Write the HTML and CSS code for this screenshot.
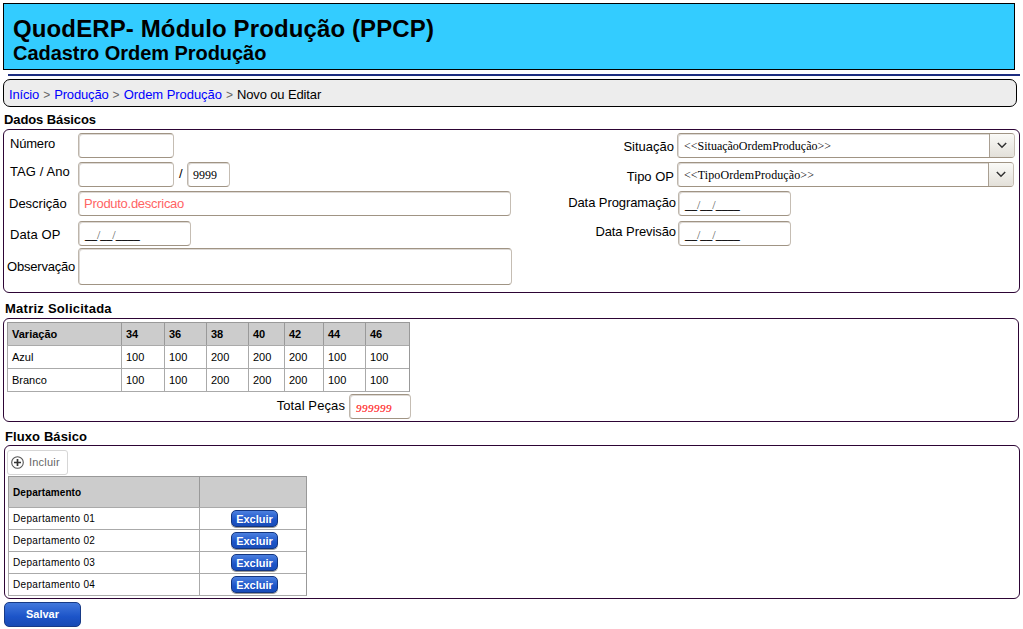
FILE: index.html
```html
<!DOCTYPE html>
<html lang="pt-BR">
<head>
<meta charset="utf-8">
<title>QuodERP - Cadastro Ordem Produção</title>
<link rel="stylesheet" href="styles.css">
</head>
<body>
<header class="banner"><h1>QuodERP- Módulo Produção (PPCP)</h1><h2>Cadastro Ordem Produção</h2></header>
<div class="rule"></div>
<nav class="crumbs"><a>Início</a><i>&gt;</i><a>Produção</a><i>&gt;</i><a class="c3">Ordem Produção</a><i>&gt;</i><span>Novo ou Editar</span></nav>
<h3 class="title t1">Dados Básicos</h3>
<section class="panel basic">
  <div class="left">
    <div class="row r1"><label class="l-num">Número</label><div class="input w95"></div></div>
    <div class="row r2"><label class="l-tag">TAG / Ano</label><div class="input w95"></div><span class="slash">/</span><div class="input w43 serif">9999</div></div>
    <div class="row r3"><label class="l-desc">Descrição</label><div class="input w432 red">Produto.descricao</div></div>
    <div class="row r4"><label class="l-data">Data OP</label><div class="input w112 date">__<em>/</em>__<em>/</em>____</div></div>
    <div class="row r5"><label class="l-obs">Observação</label><div class="input w433 tall"></div></div>
  </div>
  <div class="right">
    <div class="row r1"><label class="l-sit">Situação</label><div class="input select s1"><span class="v1">&lt;&lt;SituaçãoOrdemProdução&gt;&gt;</span><b><svg width="10" height="7" viewBox="0 0 10 7"><path d="M.8 1 5 5.3 9.200 1" fill="none" stroke="#333" stroke-width="1.5"/></svg></b></div></div>
    <div class="row r2"><label class="l-tipo">Tipo OP</label><div class="input select s2"><span class="v2">&lt;&lt;TipoOrdemProdução&gt;&gt;</span><b><svg width="10" height="7" viewBox="0 0 10 7"><path d="M.8 1 5 5.3 9.200 1" fill="none" stroke="#333" stroke-width="1.5"/></svg></b></div></div>
    <div class="row r3"><label class="l-prog">Data Programação</label><div class="input w112 date">__<em>/</em>__<em>/</em>____</div></div>
    <div class="row r4"><label class="l-prev">Data Previsão</label><div class="input w112 date">__<em>/</em>__<em>/</em>____</div></div>
  </div>
</section>
<h3 class="title t2">Matriz Solicitada</h3>
<section class="panel matrix">
  <div class="grid m">
    <div class="h">Variação</div><div class="h">34</div><div class="h">36</div><div class="h">38</div><div class="h">40</div><div class="h">42</div><div class="h">44</div><div class="h">46</div>
    <div>Azul</div><div>100</div><div>100</div><div>200</div><div>200</div><div>200</div><div>100</div><div>100</div>
    <div>Branco</div><div>100</div><div>100</div><div>200</div><div>200</div><div>200</div><div>100</div><div>100</div>
  </div>
  <div class="total"><label>Total Peças</label><div class="input sum">999999</div></div>
</section>
<h3 class="title t3">Fluxo Básico</h3>
<section class="panel flow">
  <button class="add"><svg width="13" height="13" viewBox="0 0 13 13"><circle cx="6.500" cy="6.500" r="5.800" fill="none" stroke="#555" stroke-width="1.100"/><path d="M3 6.500h7M6.500 3v7" stroke="#333" stroke-width="1.700"/></svg><span>Incluir</span></button>
  <div class="grid f">
    <div class="h">Departamento</div><div class="h"></div>
    <div>Departamento 01</div><div class="act"><button class="del">Excluir</button></div>
    <div>Departamento 02</div><div class="act"><button class="del">Excluir</button></div>
    <div>Departamento 03</div><div class="act"><button class="del">Excluir</button></div>
    <div>Departamento 04</div><div class="act"><button class="del">Excluir</button></div>
  </div>
</section>
<button class="save">Salvar</button>
</body>
</html>
```
FILE: styles.css
```css
* { box-sizing: border-box; }
html { background: #fff; }
body { margin: 0; padding: 3px 0 0 3px; width: 1023px; height: 629px; overflow: hidden; font: 13px/16px "Liberation Sans", Arial, sans-serif; color: #000; }
h1, h2, h3 { margin: 0; }
button { font-family: inherit; padding: 0; margin: 0; display: block; }
.banner { width: 1012px; height: 67px; border: 1px solid #000; background: #3cf; padding: 11px 0 0 9px; }
.banner h1 { font-size: 24px; line-height: 28px; letter-spacing: .12px; }
.banner h2 { font-size: 20px; line-height: 20px; letter-spacing: -.05px; }
.rule { width: 1012px; height: 2px; margin: 4px 0 3px 5px; background: #1c2d80; }
.crumbs { display: flex; align-items: center; width: 1014px; height: 28px; padding: 3px 0 0 5px; border: 1px solid #000; border-radius: 7px; background: #ededed; white-space: nowrap; }
.crumbs a { color: #00f; letter-spacing: -.15px; }
.crumbs .c3 { letter-spacing: -.05px; }
.crumbs span { letter-spacing: -.13px; }
.crumbs i { width: 15px; text-align: center; font-style: normal; color: #666; font-size: 12px; }
.title { font-size: 13px; line-height: 16px; letter-spacing: .2px; }
.t1 { margin: 4px 0 0 1px; padding-top: 1px; height: 18px; letter-spacing: -.1px; }
.t2 { padding-top: 8px; margin-left: 2px; height: 25px; letter-spacing: .25px; }
.t3 { padding-top: 7px; margin-left: 2px; height: 23px; letter-spacing: .1px; }
.panel { border: 1px solid #2d0535; border-radius: 6px; background: #fff; }
.basic { width: 1017px; height: 164px; display: flex; justify-content: space-between; padding: 3px 0 0 0; }
.left { width: 510px; }
.right { width: 452px; }
.row { display: flex; align-items: flex-start; white-space: nowrap; height: 29px; }
.left .row label { width: 74px; }
.right .row label { text-align: right; }
.r3 { height: 30px; }
.left .r4 { height: 27px; }
.input { height: 25px; border: 1px solid #a09484; border-left-color: #bdb5ab; border-right-color: #c5bdb3; border-radius: 4px; background: #fff; box-shadow: inset 1px 1px 0 #ddd9d5; font-size: 13px; line-height: 24px; padding-left: 6px; white-space: nowrap; }
.w95 { width: 96px; }
.w43 { width: 43px; }
.w432 { width: 433px; }
.w433 { width: 434px; }
.w112 { width: 113px; }
.tall { height: 37px; }
.serif { font-family: "Liberation Serif", serif; font-size: 12px; padding-left: 5px; }
.red { color: #ff6464; padding-left: 5px; letter-spacing: -.28px; }
.date { font-size: 12px; font-family: "Liberation Serif", serif; line-height: 26px; text-shadow: 0 0 0 #000; }
.date em { font-style: normal; color: #555; font-size: 12px; text-shadow: none; }
.slash { width: 13px; padding: 4px 0 0 5px; }
.left label { padding-left: 6px; padding-top: 3px; letter-spacing: .1px; }
.left .l-num { letter-spacing: -.2px; }
.left .l-tag { padding-top: 2px; }
.left .l-desc { padding-left: 5px; padding-top: 5px; letter-spacing: 0; }
.left .l-data { padding-top: 6px; }
.left .l-obs { padding-left: 3px; padding-top: 11px; letter-spacing: -.2px; }
.right label { width: 110px; padding-right: 3px; }
.l-sit { padding-top: 6px; }
.l-tipo { padding-top: 7px; }
.right .l-prog, .right .l-prev { width: 111px; padding-right: 2px; letter-spacing: -.08px; }
.l-prog { padding-top: 4px; }
.l-prev { padding-top: 3px; }
.select { display: flex; justify-content: space-between; font: 12px/24px "Liberation Serif", serif; overflow: hidden; }
.s1 { width: 338px; }
.s2 { width: 337px; }
.v2 { letter-spacing: .1px; }
.select b { width: 25px; border-left: 1px solid #a99f92; background: linear-gradient(#fafaf7, #e3e0d9); display: flex; align-items: center; justify-content: center; }
.matrix { width: 1016px; height: 104px; padding: 3px 0 0 3px; }
.grid { display: grid; border-right: 1px solid #999; border-bottom: 1px solid #aaa; }
.grid > div { border-left: 1px solid #aaa; border-top: 1px solid #aaa; padding-left: 4px; }
.grid > .h { background: #ccc; font-weight: bold; border-color: #999; }
.m { width: 403px; height: 70px; grid-template-columns: 114px 43px 42px 42px 36px 39px 42px 44px; grid-template-rows: repeat(3, 23px); font-size: 11px; line-height: 23px; }
.total { display: flex; width: 404px; justify-content: flex-end; padding-top: 2px; }
.total label { padding: 4px 4px 0 0; letter-spacing: .1px; }
.sum { width: 62px; color: #f44; font: italic 11px/26px "Liberation Serif", serif; letter-spacing: .5px; text-shadow: 0 0 0 #f55; }
.flow { width: 1016px; height: 154px; margin-left: 1px; padding: 4px 0 0 3px; }
.add { display: flex; align-items: center; gap: 5px; width: 61px; height: 25px; margin-left: -1px; padding-left: 3px; border: 1px solid #d6d6d6; border-radius: 3px; background: #fff; color: #666; font-size: 11px; letter-spacing: .2px; }
.add span { padding-bottom: 1px; }
.f { width: 299px; height: 120px; margin-top: 1px; grid-template-columns: 191px 107px; grid-template-rows: 31px repeat(4, 22px); font-size: 10px; line-height: 21px; letter-spacing: .33px; }
.f > .h { line-height: 31px; letter-spacing: .08px; }
.f .act { padding: 2px 0 0 31px; }
.del { width: 47px; height: 17px; border: 1px solid #13357f; border-radius: 5px; background: linear-gradient(#4c80df, #1c54c8 60%, #1a4db9); color: #fff; font-size: 11px; line-height: 14px; padding-bottom: 0; font-weight: bold; box-shadow: 0 1px 0 #999; }
.save { width: 77px; height: 25px; margin: 3px 0 0 1px; padding-bottom: 2px; border: 1px solid #173a86; border-radius: 5px; background: linear-gradient(#4278dc, #1c54c8 60%, #184ab4); color: #fff; font-size: 11px; font-weight: bold; }
```
